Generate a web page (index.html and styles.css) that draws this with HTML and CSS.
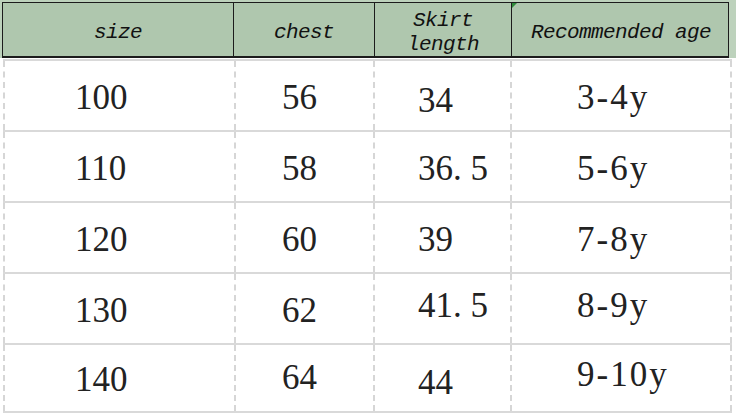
FILE: index.html
```html
<!DOCTYPE html>
<html lang="en">
<head>
<meta charset="utf-8">
<title>Size chart</title>
<link rel="stylesheet" href="styles.css">
</head>
<body>
<div class="sheet">
  <div class="band">
    <div class="head">
      <div class="hcell">size</div>
      <div class="hcell">chest</div>
      <div class="hcell">Skirt<br>length</div>
      <div class="hcell marked">Recommended age<span class="note"></span></div>
    </div>
  </div>
  <div class="rows">
    <div class="row">
      <div class="cell c1">100</div>
      <div class="cell c2">56</div>
      <div class="cell c3 lo">34</div>
      <div class="cell c4">3-4y</div>
    </div>
    <div class="row">
      <div class="cell c1">110</div>
      <div class="cell c2">58</div>
      <div class="cell c3">36. 5</div>
      <div class="cell c4">5-6y</div>
    </div>
    <div class="row">
      <div class="cell c1">120</div>
      <div class="cell c2">60</div>
      <div class="cell c3">39</div>
      <div class="cell c4">7-8y</div>
    </div>
    <div class="row">
      <div class="cell c1">130</div>
      <div class="cell c2">62</div>
      <div class="cell c3 hi">41. 5</div>
      <div class="cell c4 hi">8-9y</div>
    </div>
    <div class="row">
      <div class="cell c1">140</div>
      <div class="cell c2 hi2">64</div>
      <div class="cell c3 lo">44</div>
      <div class="cell c4 hi">9-10y</div>
    </div>
  </div>
</div>
</body>
</html>
```

FILE: styles.css
```css
html, body {
  margin: 0;
  padding: 0;
  background: #ffffff;
}

.sheet {
  width: 736px;
  height: 416px;
  overflow: hidden;
  background: #ffffff;
}

.band {
  background: #bdd2bc;
  padding: 2px 7px 0 2px;
}

.head {
  display: grid;
  grid-template-columns: 230px 141px 137px 219px;
  height: 56px;
  box-sizing: border-box;
  border: 1px solid #1c1c1c;
  border-bottom-width: 2px;
  background: #afc7ae;
}

.hcell {
  display: flex;
  align-items: center;
  justify-content: center;
  text-align: center;
  font-family: "Liberation Mono", "DejaVu Sans Mono", monospace;
  font-style: italic;
  font-size: 21px;
  letter-spacing: -0.6px;
  line-height: 24px;
  color: #111111;
  border-left: 1px solid #1c1c1c;
  padding-top: 6px;
}

.hcell:first-child {
  border-left: none;
}

.marked {
  position: relative;
}

.note {
  position: absolute;
  left: 0;
  top: 0;
  width: 0;
  height: 0;
  border-top: 5px solid #2f8a3a;
  border-right: 5px solid transparent;
}

.rows {
  margin-left: 3px;
  width: 729px;
  padding-top: 1px;
  display: flex;
  flex-direction: column;
}

.row {
  display: grid;
  grid-template-columns: 231px 139px 137px 222px;
  height: 71px;
  box-sizing: border-box;
  border-top: 2px solid #d9d9d9;
}

.row:last-child {
  height: 70px;
  border-bottom: 2px solid #d9d9d9;
}

.cell {
  display: flex;
  align-items: center;
  box-sizing: border-box;
  border-left: 2px dashed #d6d6d6;
  font-family: "Liberation Serif", "Times New Roman", serif;
  font-size: 35px;
  color: #222222;
  padding-top: 4px;
}

.cell.c4 {
  border-right: 2px dashed #d6d6d6;
  letter-spacing: 2px;
}

.c1 { padding-left: 70px; }
.c2 { padding-left: 46px; }
.c3 { padding-left: 43px; }
.c4 { padding-left: 65px; }

.lo { padding-top: 10px; }
.hi { padding-top: 0; padding-bottom: 6px; }
.hi2 { padding-top: 0; }
```
